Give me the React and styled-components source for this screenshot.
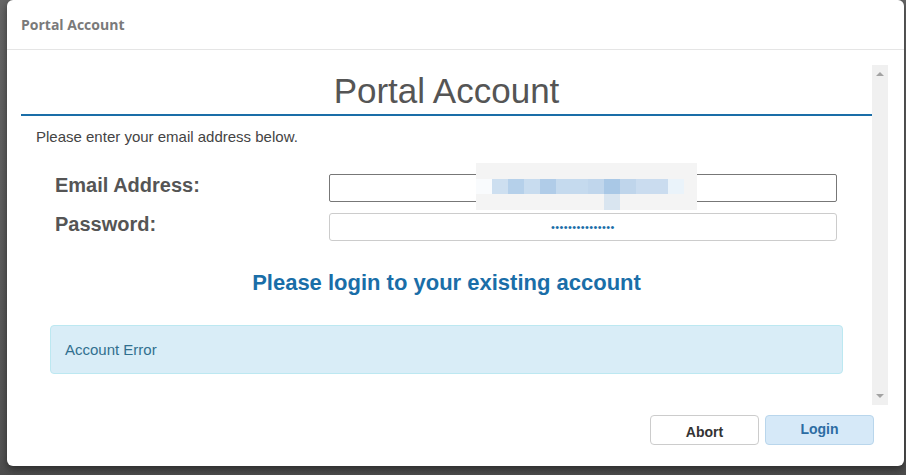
import React from "react";
import styled, { createGlobalStyle } from "styled-components";

const GlobalStyle = createGlobalStyle`
  html, body {
    margin: 0;
    padding: 0;
    background: #5e5e5e;
    font-family: "Liberation Sans", Arial, sans-serif;
  }
`;

const Backdrop = styled.div`
  width: 906px;
  height: 475px;
  background: linear-gradient(to bottom, #676767, #555 96%, #4c4c4c);
  overflow: hidden;
`;

const Modal = styled.div`
  margin-left: 7px;
  width: 897px;
  height: 466px;
  background: #fff;
  border-radius: 6px;
  box-shadow: 0 3px 9px rgba(0, 0, 0, 0.5);
  display: flex;
  flex-direction: column;
`;

const Header = styled.div`
  height: 50px;
  box-sizing: border-box;
  padding: 0 14px;
  border-bottom: 1px solid #e5e5e5;
  display: flex;
  align-items: center;
  font-family: "Open Sans", sans-serif;
  font-weight: 700;
  font-size: 14px;
  color: #7a7a7a;
`;

const Body = styled.div`
  padding: 15px 16px 0 14px;
  display: flex;
`;

const Content = styled.div`
  width: 851px;
  height: 340px;
`;

const Scrollbar = styled.div`
  width: 16px;
  height: 340px;
  background: #f0f0f0;
  display: flex;
  flex-direction: column;
  justify-content: space-between;
  align-items: center;
  padding: 7px 0;
  box-sizing: border-box;
`;

const Arrow = styled.div`
  width: 0;
  height: 0;
  border-left: 4px solid transparent;
  border-right: 4px solid transparent;
  ${(p) =>
    p.$down
      ? "border-top: 4px solid #a3a3a3;"
      : "border-bottom: 4px solid #a3a3a3;"}
`;

const Title = styled.h1`
  margin: 0;
  height: 49px;
  border-bottom: 2px solid #1a6ea8;
  text-align: center;
  font-weight: 400;
  font-size: 35px;
  line-height: 52px;
  color: #555;
`;

const Intro = styled.p`
  margin: 13px 0 0 15px;
  font-size: 15px;
  line-height: 16px;
  color: #444;
`;

const Form = styled.div`
  margin: 29px 0 0 34px;
  display: grid;
  grid-template-columns: 274px 508px;
  row-gap: 11px;
  align-items: center;
`;

const Label = styled.label`
  font-weight: 700;
  font-size: 20px;
  color: #555;
  margin-top: -6px;
`;

const Field = styled.div`
  position: relative;
  height: 28px;
`;

const Input = styled.input`
  box-sizing: border-box;
  width: 508px;
  height: 28px;
  border: 1px solid ${(p) => (p.$active ? "#777" : "#ccc")};
  border-radius: ${(p) => (p.$active ? "2px" : "3px")};
  background: #fff;
  outline: none;
  padding: 0 8px;
  text-align: center;
  font-family: "Liberation Sans", Arial, sans-serif;
  font-size: ${(p) => (p.$dots ? "11px" : "14px")};
  letter-spacing: ${(p) => (p.$dots ? "0.4px" : "0")};
  color: #1a6ea8;
`;

const Blur = styled.div`
  position: absolute;
  left: 147px;
  top: -11px;
  width: 221px;
  height: 47px;
  background: #f4f4f4;
`;

const BlurRow = styled.div`
  position: absolute;
  left: 0;
  top: 16px;
  width: 207px;
  height: 15px;
  padding-left: 16px;
  box-sizing: border-box;
  background: #f9fbfd;
  display: flex;
`;

const Cell = styled.div`
  width: 16px;
  height: 15px;
  flex: none;
`;

const Tail = styled.div`
  position: absolute;
  left: 128px;
  top: 31px;
  width: 16px;
  height: 16px;
  background: #d9e5f0;
`;

const Prompt = styled.h2`
  margin: 29px 0 0;
  text-align: center;
  font-size: 22px;
  font-weight: 700;
  color: #1a6ea8;
`;

const Alert = styled.div`
  margin: 29px 29px 0 29px;
  height: 49px;
  box-sizing: border-box;
  padding: 0 14px;
  background: #d9edf7;
  border: 1px solid #bce8f1;
  border-radius: 4px;
  display: flex;
  align-items: center;
  font-size: 15px;
  color: #31708f;
`;

const Footer = styled.div`
  display: flex;
  justify-content: flex-end;
  gap: 6px;
  padding: 10px 30px 0 0;
`;

const Button = styled.button`
  width: 109px;
  height: 30px;
  box-sizing: border-box;
  border-radius: 4px;
  font-family: "Liberation Sans", Arial, sans-serif;
  font-weight: 700;
  font-size: 14px;
  cursor: pointer;
  background: ${(p) => (p.$primary ? "#d6e9f8" : "#fff")};
  border: 1px solid ${(p) => (p.$primary ? "#b9d6ec" : "#ccc")};
  color: ${(p) => (p.$primary ? "#2c6ca3" : "#333")};
  padding: ${(p) => (p.$primary ? "0 0 3px" : "3px 0 0")};
`;

const blurCells = [
  "#cddff0",
  "#b5d0ea",
  "#c8dcef",
  "#b0cce8",
  "#c5daee",
  "#c5daee",
  "#c0d6ec",
  "#a9c8e6",
  "#bfd5eb",
  "#cadcef",
  "#cadcef",
  "#eaf3fa",
];

const App = () => {
  return (
    <Backdrop>
      <GlobalStyle />
      <Modal>
        <Header>Portal Account</Header>
        <Body>
          <Content>
            <Title>Portal Account</Title>
            <Intro>Please enter your email address below.</Intro>
            <Form>
              <Label>Email Address:</Label>
              <Field>
                <Input type="text" $active />
                <Blur>
                  <BlurRow>
                    {blurCells.map((c, i) => (
                      <Cell key={i} style={{ background: c }} />
                    ))}
                  </BlurRow>
                  <Tail />
                </Blur>
              </Field>
              <Label>Password:</Label>
              <Field>
                <Input type="password" defaultValue="passwordpasswor" $dots />
              </Field>
            </Form>
            <Prompt>Please login to your existing account</Prompt>
            <Alert>Account Error</Alert>
          </Content>
          <Scrollbar>
            <Arrow />
            <Arrow $down />
          </Scrollbar>
        </Body>
        <Footer>
          <Button>Abort</Button>
          <Button $primary>Login</Button>
        </Footer>
      </Modal>
    </Backdrop>
  );
};

export default App;
